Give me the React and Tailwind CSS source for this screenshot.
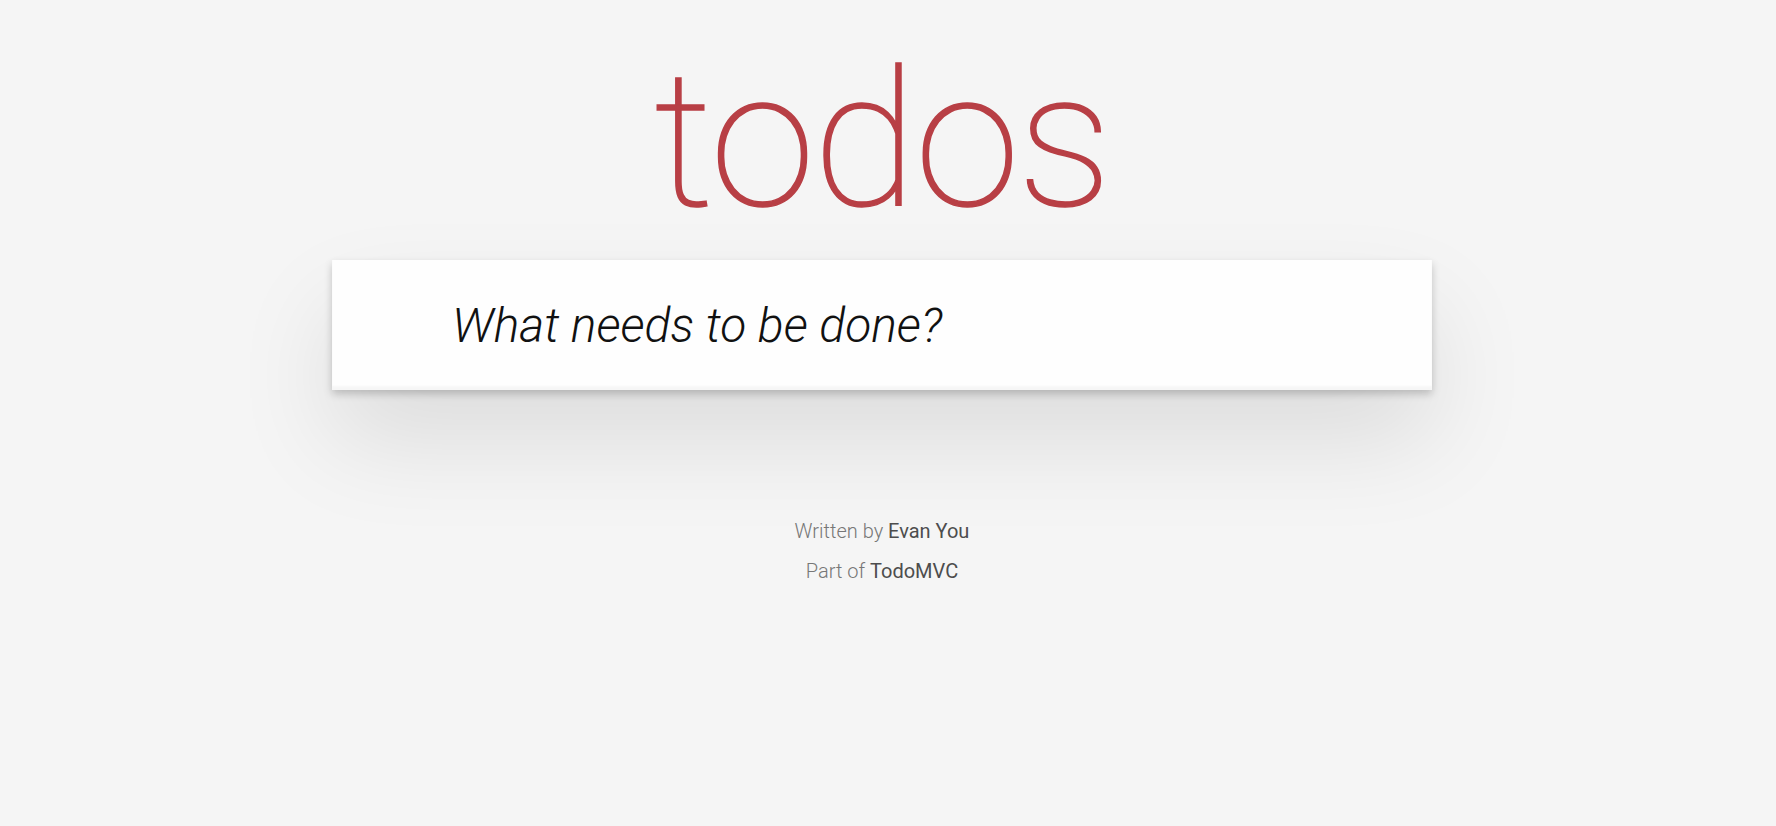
import React, { useState } from 'react';

function App() {
  const [text, setText] = useState('');

  return (
    <div className="min-h-screen bg-[#f5f5f5] font-['Roboto',sans-serif] text-[#4d4d4d]">
      <div className="flex flex-col items-center pr-3">
        <h1 className="mt-[45px] text-[190px] leading-none font-thin tracking-[-0.01em] text-[#b83f45] [-webkit-text-stroke:1.5px_#b83f45] select-none">
          todos
        </h1>

        <section className="mt-[25px] w-[1100px] bg-white shadow-[0_4px_8px_0_rgba(0,0,0,0.2),0_50px_100px_0_rgba(0,0,0,0.1)]">
          <input
            value={text}
            onChange={(e) => setText(e.target.value)}
            placeholder="What needs to be done?"
            className="block h-[130px] w-full bg-[rgba(0,0,0,0.003)] pl-[120px] pr-8 text-[48px] font-light text-[#111] outline-none shadow-[inset_0_-4px_2px_rgba(0,0,0,0.03)] placeholder:italic placeholder:text-[#111]"
          />
        </section>

        <footer className="mt-[131px] flex flex-col items-center gap-[20px] text-[20px] leading-none">
          <p>
            <span className="font-light text-[#777]">Written by </span>
            <a href="#" className="font-normal text-[#4d4d4d]">Evan You</a>
          </p>
          <p>
            <span className="font-light text-[#777]">Part of </span>
            <a href="#" className="font-normal text-[#4d4d4d]">TodoMVC</a>
          </p>
        </footer>
      </div>
    </div>
  );
}

export default App;
